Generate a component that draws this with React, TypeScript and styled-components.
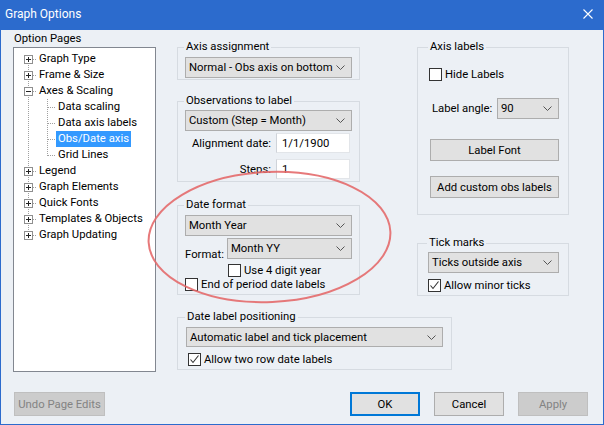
import React from 'react';
import styled, { createGlobalStyle } from 'styled-components';

const FONT = 'Roboto, "Noto Sans", "Liberation Sans", sans-serif';

const GlobalStyle = createGlobalStyle`
  html, body { margin: 0; padding: 0; background: #ecf0f5; }
  body { font-family: ${FONT}; font-size: 11px; color: #000; }
  * { box-sizing: border-box; }
`;

const Window = styled.div`
  position: relative;
  width: 604px;
  height: 425px;
  border: 1px solid #2c6bcd;
  border-top: none;
  background: #ecf0f5;
  display: flex;
  flex-direction: column;
  font-family: ${FONT};
  font-size: 11.3px;
  overflow: hidden;
`;

const TitleBar = styled.div`
  height: 30px;
  flex: none;
  background: #2c6bcd;
  color: #fff;
  display: flex;
  align-items: center;
  justify-content: space-between;
  padding: 0 10px 3px 4px;
  font-size: 12px;
`;

const Body = styled.div`
  flex: 1;
  display: flex;
  flex-direction: column;
  padding: 0 12px;
`;

const MainRow = styled.div`
  display: flex;
  align-items: flex-start;
`;

const LeftCol = styled.div`
  width: 143px;
  display: flex;
  flex-direction: column;
`;

const PaneLabel = styled.div`
  height: 17px;
  line-height: 16px;
  padding: 1px 0 0 1px;
`;

const Tree = styled.div`
  height: 325px;
  background: #fff;
  border: 1px solid #828790;
  padding: 3px 0 0 9px;
`;

const TreeRow = styled.div`
  display: flex;
  align-items: center;
  height: 16px;
`;

const TreeLabel = styled.span<{ $selected?: boolean }>`
  height: 16px;
  line-height: 16px;
  padding: 0 2px;
  white-space: nowrap;
  background: ${p => (p.$selected ? '#3399ff' : 'transparent')};
  color: ${p => (p.$selected ? '#fff' : '#000')};
`;

const RightArea = styled.div`
  margin-left: 21px;
  margin-top: 9px;
  display: flex;
  flex-direction: column;
`;

const TopSection = styled.div`
  display: flex;
  gap: 57px;
  align-items: flex-start;
`;

const Column = styled.div<{ $w: number }>`
  width: ${p => p.$w}px;
  display: flex;
  flex-direction: column;
`;

const Group = styled.fieldset<{ $pt?: number; $pb?: number; $pl?: number; $pr?: number; $mt?: number; $w?: number }>`
  margin: ${p => p.$mt ?? 0}px 0 0 0;
  min-width: 0;
  ${p => (p.$w ? `width: ${p.$w}px;` : '')}
  border: 1px solid #d6dbe1;
  padding: ${p => p.$pt ?? 2}px ${p => p.$pr ?? 7}px ${p => p.$pb ?? 3}px ${p => p.$pl ?? 7}px;
  display: flex;
  flex-direction: column;
`;

const Legend = styled.legend`
  padding: 0 2px;
  margin-left: -1px;
  line-height: 16px;
  font-size: 11.3px;
`;

const SelectBox = styled.div<{ $w?: number; $h?: number; $ml?: number; $mt?: number }>`
  display: flex;
  align-items: center;
  justify-content: space-between;
  flex: none;
  height: ${p => p.$h ?? 21}px;
  ${p => (p.$w ? `width: ${p.$w}px;` : '')}
  margin-left: ${p => p.$ml ?? 0}px;
  margin-top: ${p => p.$mt ?? 0}px;
  background: #e1e1e1;
  border: 1px solid #adadad;
  padding: 0 6px 0 3px;
  white-space: nowrap;
`;

const FieldRow = styled.div<{ $mt: number }>`
  display: flex;
  align-items: center;
  justify-content: flex-end;
  gap: 5px;
  margin-top: ${p => p.$mt}px;
  padding-right: 2px;
`;

const TextInput = styled.input`
  width: 74px;
  height: 20px;
  border: 1px solid #e2e5e9;
  border-left-color: #cfd3d9;
  background: #fff;
  padding: 0 0 0 5px;
  font-family: ${FONT};
  font-size: 11.3px;
  color: #000;
  outline: none;
`;

const FormatRow = styled.div`
  display: flex;
  align-items: flex-end;
  justify-content: space-between;
  margin-top: 2px;
`;

const FormatLabel = styled.span`
  line-height: 16px;
  margin-bottom: -4px;
`;

const CheckRow = styled.div<{ $ml?: number; $mt?: number }>`
  display: flex;
  align-items: center;
  gap: 3px;
  height: 14px;
  margin-left: ${p => p.$ml ?? 0}px;
  margin-top: ${p => p.$mt ?? 0}px;
  white-space: nowrap;
`;

const Box = styled.span`
  width: 13px;
  height: 13px;
  flex: none;
  border: 1px solid #333;
  background: #fff;
  display: flex;
  align-items: center;
  justify-content: center;
`;

const AngleRow = styled.div`
  display: flex;
  align-items: center;
  justify-content: space-between;
  padding-left: 3px;
  margin-top: 17px;
`;

const PushButton = styled.div<{ $mt: number }>`
  height: 22px;
  margin: ${p => p.$mt}px 0 0 1px;
  background: #e1e1e1;
  border: 1px solid #adadad;
  display: flex;
  align-items: center;
  justify-content: center;
  white-space: nowrap;
`;

const Footer = styled.div`
  display: flex;
  align-items: center;
  margin-top: 20px;
`;

const DialogButton = styled.div<{ $w: number; $variant?: 'default' | 'disabled' | 'normal'; $ml?: number }>`
  width: ${p => p.$w}px;
  height: 24px;
  margin-left: ${p => p.$ml ?? 0}px;
  display: flex;
  align-items: center;
  justify-content: center;
  white-space: nowrap;
  background: ${p => (p.$variant === 'disabled' ? '#cccccc' : '#e1e1e1')};
  color: ${p => (p.$variant === 'disabled' ? '#838383' : '#000')};
  border: ${p =>
    p.$variant === 'default' ? '2px solid #0078d7' : p.$variant === 'disabled' ? '1px solid #bfbfbf' : '1px solid #adadad'};
`;

const ButtonGroup = styled.div`
  margin-left: auto;
  margin-right: 3px;
  display: flex;
  gap: 14px;
`;

const Overlay = styled.svg`
  position: absolute;
  left: 0;
  top: 0;
  pointer-events: none;
`;

const Chevron = () => (
  <svg width="9" height="5" viewBox="0 0 9 5" style={{ flex: 'none' }}>
    <path d="M0.5 0.5 L4.5 4.5 L8.5 0.5" fill="none" stroke="#555" strokeWidth="1" />
  </svg>
);

const Select: React.FC<{ value: string; w?: number; h?: number; ml?: number; mt?: number }> = ({ value, w, h, ml, mt }) => (
  <SelectBox $w={w} $h={h} $ml={ml} $mt={mt}>
    <span>{value}</span>
    <Chevron />
  </SelectBox>
);

const Check: React.FC<{ label: string; checked?: boolean; ml?: number; mt?: number }> = ({ label, checked, ml, mt }) => (
  <CheckRow $ml={ml} $mt={mt}>
    <Box>
      {checked && (
        <svg width="11" height="11" viewBox="0 0 11 11">
          <path d="M1.5 5.5 L4 8.5 L9.5 1.5" fill="none" stroke="#333" strokeWidth="1.1" />
        </svg>
      )}
    </Box>
    <span>{label}</span>
  </CheckRow>
);

const DOT = '#a0a0a0';

const RootGlyph: React.FC<{ kind: 'plus' | 'minus'; first?: boolean; last?: boolean }> = ({ kind, first, last }) => (
  <svg width="14" height="16" viewBox="0 0 14 16" shapeRendering="crispEdges" style={{ flex: 'none' }}>
    <line x1="5.5" y1={first ? 8 : 0} x2="5.5" y2={last ? 8 : 16} stroke={DOT} strokeDasharray="1 1" />
    <line x1="10" y1="8.5" x2="14" y2="8.5" stroke={DOT} strokeDasharray="1 1" />
    <rect x="1.5" y="4.5" width="8" height="8" fill="#fff" stroke="#8f8f8f" />
    <line x1="3" y1="8.5" x2="8" y2="8.5" stroke="#222" />
    {kind === 'plus' && <line x1="5.5" y1="6" x2="5.5" y2="11" stroke="#222" />}
  </svg>
);

const ChildGlyph: React.FC<{ last?: boolean }> = ({ last }) => (
  <>
    <svg width="19" height="16" viewBox="0 0 19 16" shapeRendering="crispEdges" style={{ flex: 'none' }}>
      <line x1="5.5" y1="0" x2="5.5" y2="16" stroke={DOT} strokeDasharray="1 1" />
    </svg>
    <svg width="14" height="16" viewBox="0 0 14 16" shapeRendering="crispEdges" style={{ flex: 'none' }}>
      <line x1="5.5" y1="0" x2="5.5" y2={last ? 9 : 16} stroke={DOT} strokeDasharray="1 1" />
      <line x1="6" y1="8.5" x2="14" y2="8.5" stroke={DOT} strokeDasharray="1 1" />
    </svg>
  </>
);

type Item = { label: string; kind?: 'plus' | 'minus'; child?: boolean; last?: boolean; selected?: boolean };

const items: Item[] = [
  { label: 'Graph Type', kind: 'plus' },
  { label: 'Frame & Size', kind: 'plus' },
  { label: 'Axes & Scaling', kind: 'minus' },
  { label: 'Data scaling', child: true },
  { label: 'Data axis labels', child: true },
  { label: 'Obs/Date axis', child: true, selected: true },
  { label: 'Grid Lines', child: true, last: true },
  { label: 'Legend', kind: 'plus' },
  { label: 'Graph Elements', kind: 'plus' },
  { label: 'Quick Fonts', kind: 'plus' },
  { label: 'Templates & Objects', kind: 'plus' },
  { label: 'Graph Updating', kind: 'plus', last: true },
];

export default function App() {
  return (
    <>
      <GlobalStyle />
      <Window>
        <TitleBar>
          <span>Graph Options</span>
          <svg width="10" height="10" viewBox="0 0 10 10">
            <path d="M0.5 0.5 L9.5 9.5 M9.5 0.5 L0.5 9.5" stroke="#fff" strokeWidth="1.1" />
          </svg>
        </TitleBar>
        <Body>
          <MainRow>
            <LeftCol>
              <PaneLabel>Option Pages</PaneLabel>
              <Tree>
                {items.map((it, i) => (
                  <TreeRow key={it.label}>
                    {it.child ? (
                      <ChildGlyph last={it.last} />
                    ) : (
                      <RootGlyph kind={it.kind!} first={i === 0} last={it.last} />
                    )}
                    <TreeLabel $selected={it.selected}>{it.label}</TreeLabel>
                  </TreeRow>
                ))}
              </Tree>
            </LeftCol>
            <RightArea>
              <TopSection>
                <Column $w={183}>
                  <Group $pb={1}>
                    <Legend>Axis assignment</Legend>
                    <Select value="Normal - Obs axis on bottom" />
                  </Group>
                  <Group $mt={13} $pt={1} $pb={2}>
                    <Legend>Observations to label</Legend>
                    <Select value="Custom (Step = Month)" />
                    <FieldRow $mt={2}>
                      <span>Alignment date:</span>
                      <TextInput readOnly value="1/1/1900" />
                    </FieldRow>
                    <FieldRow $mt={6}>
                      <span>Steps:</span>
                      <TextInput readOnly value="1" />
                    </FieldRow>
                  </Group>
                  <Group $mt={15} $pb={3}>
                    <Legend>Date format</Legend>
                    <Select value="Month Year" />
                    <FormatRow>
                      <FormatLabel>Format:</FormatLabel>
                      <Select value="Month YY" w={125} />
                    </FormatRow>
                    <Check label="Use 4 digit year" ml={43} mt={4} />
                    <Check label="End of period date labels" />
                  </Group>
                </Column>
                <Column $w={152}>
                  <Group $pt={12} $pl={11} $pr={9} $pb={16}>
                    <Legend>Axis labels</Legend>
                    <Check label="Hide Labels" />
                    <AngleRow>
                      <span>Label angle:</span>
                      <Select value="90" w={62} />
                    </AngleRow>
                    <PushButton $mt={20}>Label Font</PushButton>
                    <PushButton $mt={15}>Add custom obs labels</PushButton>
                  </Group>
                  <Group $mt={20} $pt={1} $pl={10} $pr={9} $pb={3}>
                    <Legend>Tick marks</Legend>
                    <Select value="Ticks outside axis" />
                    <Check label="Allow minor ticks" checked mt={5} />
                  </Group>
                </Column>
              </TopSection>
              <Group $mt={13} $w={275} $pl={8} $pr={8} $pb={3}>
                <Legend>Date label positioning</Legend>
                <Select value="Automatic label and tick placement" h={20} />
                <Check label="Allow two row date labels" checked ml={2} mt={5} />
              </Group>
            </RightArea>
          </MainRow>
          <Footer>
            <DialogButton $w={91} $variant="disabled" $ml={1}>
              Undo Page Edits
            </DialogButton>
            <ButtonGroup>
              <DialogButton $w={70} $variant="default">OK</DialogButton>
              <DialogButton $w={70}>Cancel</DialogButton>
              <DialogButton $w={70} $variant="disabled">Apply</DialogButton>
            </ButtonGroup>
          </Footer>
        </Body>
        <Overlay width="604" height="425" viewBox="0 0 604 425">
          <ellipse
            cx="268.5"
            cy="237"
            rx="121"
            ry="65"
            transform="rotate(-2.5 268.5 237)"
            fill="none"
            stroke="#e46a6c"
            strokeWidth="2"
            opacity="0.9"
          />
        </Overlay>
      </Window>
    </>
  );
}
